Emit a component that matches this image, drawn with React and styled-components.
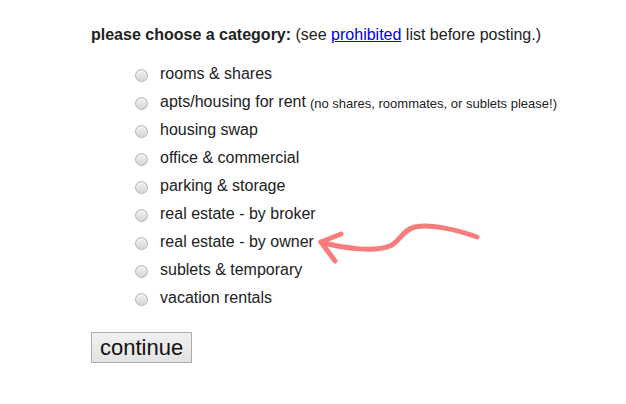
import React from 'react'
import styled, { createGlobalStyle } from 'styled-components'

const GlobalStyle = createGlobalStyle`
  html, body {
    margin: 0;
    padding: 0;
    background: #ffffff;
  }
  body {
    font-family: 'Liberation Sans', Arial, sans-serif;
    color: #222222;
  }
`;

const Page = styled.div`
  position: relative;
  width: 626px;
  height: 404px;
  padding: 25px 0 0 91px;
  box-sizing: border-box;
`;

const Heading = styled.div`
  font-size: 16px;
  line-height: 20px;
  white-space: nowrap;
`;

const Bold = styled.b`
  font-weight: bold;
`;

const Link = styled.a`
  color: #0000ee;
  text-decoration: underline;
`;

const List = styled.ul`
  list-style: none;
  margin: 15px 0 0;
  padding: 0 0 0 44px;
`;

const Row = styled.li`
  display: flex;
  align-items: center;
  height: 28px;
  font-size: 16px;
`;

const Radio = styled.input.attrs({ type: 'radio', name: 'category' })`
  appearance: none;
  width: 13px;
  height: 13px;
  margin: 3px 12px 0 0;
  border-radius: 50%;
  border: 1px solid #b4b4b4;
  background: linear-gradient(#f2f2f2, #d6d6d6);
  box-sizing: border-box;
  flex: none;
`;

const Note = styled.small`
  font-size: 13px;
  margin-left: 4px;
  margin-top: 2px;
`;

const Button = styled.button`
  margin-top: 20px;
  font-family: 'Liberation Sans', Arial, sans-serif;
  font-size: 22px;
  line-height: 25px;
  padding: 2px 8px;
  color: #111;
  border: 1px solid #acacac;
  border-radius: 0;
  background: linear-gradient(#f0f0f0, #e3e3e3);
`;

const Arrow = styled.svg`
  position: absolute;
  left: 0;
  top: 0;
  pointer-events: none;
`;

const categories = [
  { label: 'rooms & shares' },
  { label: 'apts/housing for rent', note: '(no shares, roommates, or sublets please!)' },
  { label: 'housing swap' },
  { label: 'office & commercial' },
  { label: 'parking & storage' },
  { label: 'real estate - by broker' },
  { label: 'real estate - by owner' },
  { label: 'sublets & temporary' },
  { label: 'vacation rentals' },
];

const App = () => (
  <Page>
    <GlobalStyle />
    <Heading>
      <Bold>please choose a category:</Bold> (see <Link href="#">prohibited</Link> list before posting.)
    </Heading>
    <List>
      {categories.map(c => (
        <Row key={c.label}>
          <Radio />
          {c.label}
          {c.note && <Note>{c.note}</Note>}
        </Row>
      ))}
    </List>
    <Button>continue</Button>
    <Arrow width="626" height="404" viewBox="0 0 626 404">
      <g fill="none" stroke="#f77d7d" strokeWidth="5" strokeLinecap="round" strokeLinejoin="round">
        <path d="M321,242 C345,249 375,252 390,246 C400,242 402,230 415,227 C430,224 455,229 477,237" />
        <path d="M341,234 L321,242 L335,261" />
      </g>
    </Arrow>
  </Page>
);

export default App
